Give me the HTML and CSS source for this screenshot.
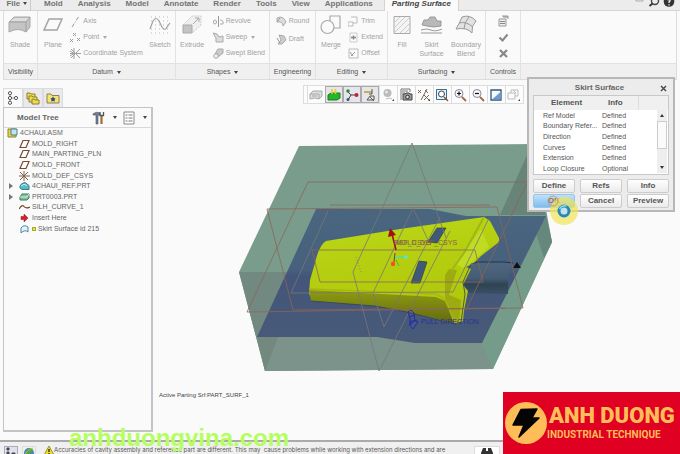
FILE: index.html
```html
<!DOCTYPE html>
<html lang="en">
<head>
<meta charset="utf-8">
<title>Mold design</title>
<link rel="stylesheet" href="styles.css">
</head>
<body>
<div class="app">
  <header class="tabbar">
    <button class="tab file">File <span class="caret"></span></button>
    <nav class="tabs">
      <button class="tab">Mold</button><button class="tab">Analysis</button><button class="tab">Model</button><button class="tab">Annotate</button><button class="tab">Render</button><button class="tab">Tools</button><button class="tab">View</button><button class="tab">Applications</button><button class="tab active">Parting Surface</button>
    </nav>
    <svg class="tools" width="46" height="11" viewBox="634 0 46 11"><path d="M636 0v1h7v-1" fill="none" stroke="#aaa"/><circle cx="655" cy="1" r="3.5" fill="none" stroke="#444" stroke-width="1.4"/><path d="M652.500 3.500 649.500 6" stroke="#333" stroke-width="1.800"/><circle cx="669" cy="1.500" r="5.300" fill="#333"/><path d="M667.500 0q3-1 2.500 1l-1 1v1M669 4.200v1.200" fill="none" stroke="#fff" stroke-width="1.200"/></svg>
  </header>

  <div class="ribbon">
    <section class="group">
      <div class="body">
        <button class="big"><svg width="24" height="20" viewBox="0 0 24 20"><path d="M1 7 6 2h16v10l-4 5q-8-5-17 0z" fill="#c4c4c4" stroke="#a8a8a8"/><path d="M1 7h17v10M18 7l4-5" fill="none" stroke="#a0a0a0"/><path d="M2 6 6.500 3H21l-3 3z" fill="#ddd"/></svg>Shade</button>
      </div>
      <div class="label">Visibility</div>
    </section>
    <section class="group">
      <div class="body spread">
        <button class="big"><svg width="22" height="20" viewBox="0 0 22 20"><path d="M7 4h13l-5 11H2z" fill="#fafafa" stroke="#a3a3a3" stroke-width="1.500"/></svg>Plane</button>
        <div class="stack">
          <button class="small"><svg width="11" height="11" viewBox="0 0 11 11"><path d="M2 11 9 0" stroke="#999" stroke-dasharray="4 1.500 1 1.500"/></svg>Axis</button>
          <button class="small"><svg width="11" height="11" viewBox="0 0 11 11"><path d="m3 1 3 3m0-3L3 4M0 7l3 3m0-3-3 3M7 6l3 3m0-3L7 9" stroke="#999"/></svg>Point <span class="caret"></span></button>
          <button class="small"><svg width="11" height="11" viewBox="0 0 11 11"><path d="M1 1l9 9M10 1l-9 9M4 0v11M0 5.500h11M0 3l4 2.500L0 8" fill="none" stroke="#a0a0a0"/></svg>Coordinate System</button>
        </div>
        <button class="big"><svg width="22" height="20" viewBox="0 0 22 20"><path d="M2 2h19M2 6h19M2 10h19M2 14h19M2 18h19" stroke="#bbb" stroke-dasharray="1 3"/><path d="M1 14 4 6q3-5 6 0l3 6q3 5 5 0l3-4" fill="none" stroke="#a0a0a0" stroke-width="1.200"/></svg>Sketch</button>
      </div>
      <div class="label">Datum <span class="caret"></span></div>
    </section>
    <section class="group">
      <div class="body spread">
        <button class="big"><svg width="22" height="20" viewBox="0 0 22 20"><path d="M2 10 11 1h9v9l-9 8" fill="#f0f0f0" stroke="#ccc" stroke-dasharray="2 1"/><path d="M2 10h9v8H2z" fill="#c4c4c4" stroke="#aaa"/><path d="m12 9 6-6m0 0h-4m4 0v4" fill="none" stroke="#aaa"/></svg>Extrude</button>
        <div class="stack">
          <button class="small"><svg width="11" height="11" viewBox="0 0 11 11"><path d="M5.500 0v11" stroke="#999"/><ellipse cx="2" cy="6" rx="1.500" ry="2" fill="none" stroke="#aaa"/><path d="M7 4q4 0 3 4H7" fill="none" stroke="#aaa"/></svg>Revolve</button>
          <button class="small"><svg width="11" height="11" viewBox="0 0 11 11"><path d="M0 1q5 0 6 4l4-1v6H3V6z" fill="#ddd" stroke="#aaa"/></svg>Sweep <span class="caret"></span></button>
          <button class="small"><svg width="11" height="11" viewBox="0 0 11 11"><path d="M5 1h5v4L5 9V6H2z" fill="#ccc" stroke="#aaa"/><circle cx="3" cy="8" r="2.300" fill="#eee" stroke="#aaa"/></svg>Swept Blend</button>
        </div>
      </div>
      <div class="label">Shapes <span class="caret"></span></div>
    </section>
    <section class="group">
      <div class="body center">
        <div class="stack loose">
          <button class="small"><svg width="11" height="11" viewBox="0 0 11 11"><path d="M1 2q6-3 9 4l-3 4q0-5-6-4z" fill="#ddd" stroke="#aaa"/><path d="m1 6 3-4" stroke="#999"/></svg>Round</button>
          <button class="small"><svg width="11" height="11" viewBox="0 0 11 11"><path d="M3 1 8 2l2 4-4 4H2l3-4z" fill="#ccc" stroke="#aaa"/><path d="m1 4 3 5" stroke="#999"/></svg>Draft</button>
        </div>
      </div>
      <div class="label">Engineering</div>
    </section>
    <section class="group">
      <div class="body spread">
        <button class="big"><svg width="22" height="20" viewBox="0 0 22 20"><path d="M10 1h10v12H10z" fill="none" stroke="#aaa" stroke-width="1.200"/><circle cx="7.500" cy="12" r="6.500" fill="#fafafa" stroke="#aaa" stroke-width="1.200"/></svg>Merge</button>
        <div class="stack">
          <button class="small"><svg width="11" height="11" viewBox="0 0 11 11"><path d="M3 1h6v6H5M0 6h5v4H0z" fill="none" stroke="#bbb"/></svg>Trim</button>
          <button class="small"><svg width="11" height="11" viewBox="0 0 11 11"><path d="M2 1h7v9H2z" fill="none" stroke="#ccc"/><path d="M3 5.500h5M5.500 3.500v4" stroke="#888" stroke-width="1.500"/></svg>Extend</button>
          <button class="small"><svg width="11" height="11" viewBox="0 0 11 11"><path d="M1 1h9v9H1z" fill="none" stroke="#bbb"/><path d="m3 8 4-4M2 4l3 4" stroke="#999"/></svg>Offset</button>
        </div>
      </div>
      <div class="label">Editing <span class="caret"></span></div>
    </section>
    <section class="group">
      <div class="body spread">
        <button class="big"><svg width="20" height="20" viewBox="0 0 20 20"><path d="M2 1.500h16v17H2z" fill="#f4f4f4" stroke="#aaa"/><path d="M2 8 8 2M2 13 13 2M3 17 17 3M8 18l10-10M13 18l5-5" stroke="#ccc"/></svg>Fill</button>
        <button class="big"><svg width="24" height="20" viewBox="0 0 24 20"><path d="m2 10 2-5h4l2-3h5l2 4h4v5q-8 2-14 0z" fill="#b8b8b8" stroke="#999"/><path d="M1 15q6-2 10 0t11-1M1 18h21" fill="none" stroke="#999"/></svg>Skirt<br>Surface</button>
        <button class="big"><svg width="24" height="20" viewBox="0 0 24 20"><path d="M8 2q8-3 14 4-5 5-4 12-5-6-16-4 3-5 6-12z" fill="#e2e2e2" stroke="#999"/><path d="M5 8q7-2 14 4M15 2q-5 5-5 12" fill="none" stroke="#999"/></svg>Boundary<br>Blend</button>
      </div>
      <div class="label">Surfacing <span class="caret"></span></div>
    </section>
    <section class="group">
      <div class="body center">
        <div class="stack">
          <button class="small" aria-label="Properties"><svg width="11" height="12" viewBox="0 0 11 12"><path d="M1 4h7v7H1zM4 1h6v3" fill="#eee" stroke="#999"/><path d="M2 6.500h5M2 8.500h5M5 2h5" stroke="#888"/></svg></button>
          <button class="small" aria-label="Accept"><svg width="11" height="11" viewBox="0 0 11 11"><path d="m1.500 5.500 3 3 5-6" fill="none" stroke="#888" stroke-width="2"/></svg></button>
          <button class="small" aria-label="Cancel feature"><svg width="11" height="11" viewBox="0 0 11 11"><path d="m2 2 7 7M9 2 2 9" stroke="#888" stroke-width="2.200"/></svg></button>
        </div>
      </div>
      <div class="label">Controls</div>
    </section>
    <section class="group"><div class="body"></div><div class="label"></div></section>
  </div>

  <main class="work">
    <aside class="navigator">
      <div class="navtabs">
        <button class="navtab active" aria-label="Model tree"><svg width="12" height="14" viewBox="0 0 12 14"><path d="M3 2v10M3 7h5" stroke="#999"/><circle cx="3" cy="2.200" r="1.600" fill="#fff" stroke="#555"/><circle cx="3" cy="7" r="1.600" fill="#fff" stroke="#555"/><circle cx="3" cy="11.800" r="1.600" fill="#fff" stroke="#555"/><circle cx="9" cy="7" r="1.600" fill="#fff" stroke="#555"/></svg></button>
        <button class="navtab" aria-label="Folders"><svg width="14" height="14" viewBox="0 0 14 14"><g fill="#efdc4e" stroke="#8a8030"><path d="M1 2h3l1 1h4v5H1z"/><path d="M3 5h3l1 1h4v5H3z"/><path d="M6 8h2l1 1h4v4H6z"/></g></svg></button>
        <button class="navtab" aria-label="Favorites"><svg width="14" height="14" viewBox="0 0 14 14"><path d="M1 3h4l1 1.500h7V12H1z" fill="#f5e46a" stroke="#8a8250"/><path d="m7 5.500 1 1.500 1.500.5L8.500 9l.5 1.500L7 10l-2 .5L5.500 9l-1-1.500L6 7z" fill="#35459a"/></svg></button>
      </div>
      <div class="panel">
        <div class="panelhead">
          <h2>Model Tree</h2>
          <button class="plain" aria-label="Settings"><svg width="13" height="14" viewBox="0 0 13 14"><path d="M1 3q3-3 7-1v2H6v9H4V4H1z" fill="#6b7fa0" stroke="#555" stroke-width=".6"/><path d="M9.500 5v8" stroke="#a06a3a" stroke-width="2.200"/><path d="M8 1v3.500h3.500V1" fill="none" stroke="#555" stroke-width="1.300"/></svg><span class="caret"></span></button>
          <button class="plain" aria-label="Show"><svg width="12" height="14" viewBox="0 0 12 14"><path d="M1 1h10v12H1z" fill="#fff" stroke="#888"/><path d="M2.500 4h2m1 0h4m-7 3h2m1 0h4m-7 3h2m1 0h4" stroke="#777"/></svg><span class="caret"></span></button>
        </div>
        <ul class="tree">
          <li><svg width="11" height="10" viewBox="0 0 11 10"><path d="M1 1h8v8H1z" fill="#e8d640" stroke="#8a8430"/><path d="M4 1h6v6H4z" fill="#b8e8f0" stroke="#579"/></svg>4CHAUI.ASM</li>
          <li><i></i><svg width="11" height="10" viewBox="0 0 11 10"><path d="M4 1.500h6L7 8.500H1z" fill="#fff" stroke="#7a4a32" stroke-width="1.200"/></svg>MOLD_RIGHT</li>
          <li><i></i><svg width="11" height="10" viewBox="0 0 11 10"><path d="M4 1.500h6L7 8.500H1z" fill="#fff" stroke="#7a4a32" stroke-width="1.200"/></svg>MAIN_PARTING_PLN</li>
          <li><i></i><svg width="11" height="10" viewBox="0 0 11 10"><path d="M4 1.500h6L7 8.500H1z" fill="#fff" stroke="#7a4a32" stroke-width="1.200"/></svg>MOLD_FRONT</li>
          <li><i></i><svg width="11" height="10" viewBox="0 0 11 10"><path d="M1 1l8 8M9 1 1 9M5 0v10M0 5h11" stroke="#806048"/></svg>MOLD_DEF_CSYS</li>
          <li><i class="open"></i><svg width="11" height="10" viewBox="0 0 11 10"><path d="M1 5q1-3 5-3.500l4 3v4H3L1 7z" fill="#5bb8c4" stroke="#36808c"/><path d="M2 5q3-3 6-.5" fill="none" stroke="#c8f0f0"/></svg>4CHAUI_REF.PRT</li>
          <li><i class="open"></i><svg width="11" height="10" viewBox="0 0 11 10"><path d="M1 5 3 2h7v4L8 8H1z" fill="#7cc29a" stroke="#407860"/><path d="M1 5h7l2-3" fill="none" stroke="#d0f0dc"/></svg>PRT0003.PRT</li>
          <li><i></i><svg width="11" height="10" viewBox="0 0 11 10"><path d="M0 7q3-5 5-2.500T11 5" fill="none" stroke="#7a4a32" stroke-width="1.200"/></svg>SILH_CURVE_1</li>
          <li><i></i><svg width="11" height="10" viewBox="0 0 11 10"><path d="M2 3.500h3V1l4 4-4 4V6.500H2z" fill="#d8202a" stroke="#901018" stroke-width=".5"/></svg>Insert Here</li>
          <li><i></i><svg width="11" height="10" viewBox="0 0 11 10"><path d="M2 9V4q3-4 7-1v5Q6 5 2 9z" fill="#e2f4fa" stroke="#4a86a8"/></svg><b class="new"></b>Skirt Surface id 215</li>
        </ul>
      </div>
    </aside>

    <section class="viewport">
      <div class="viewbar">
        <button aria-label="Saved views"><svg width="14" height="14" viewBox="0 0 14 14"><path d="M1 6 4 3h9v5l-3 3q-4-2-9 0z" fill="#ddd" stroke="#aaa"/><path d="M1 6h9v5M3 8h5" stroke="#aaa" fill="none"/></svg></button>
        <button class="on" aria-label="Mold display"><svg width="14" height="14" viewBox="0 0 14 14"><path d="M1 7 4 5h9v5l-3 2H1z" fill="#27b52c" stroke="#157a1a"/><path d="M5 1v5M8.500 1v5" stroke="#e4d020" stroke-width="1.600"/></svg></button>
        <button class="on" aria-label="Datum display"><svg width="14" height="14" viewBox="0 0 14 14"><path d="M3 2v2l3 3-3 5M6 7h5" fill="none" stroke="#444"/><circle cx="3" cy="3" r="1.800" fill="#2a8a4a"/><circle cx="3" cy="11.500" r="1.500" fill="#357"/><circle cx="11.500" cy="7" r="2" fill="#c22038"/></svg></button>
        <button class="on" aria-label="Annotation display"><svg width="14" height="14" viewBox="0 0 14 14"><path d="M1 4h8" stroke="#b4a020" stroke-width="1.500"/><path d="M9 1v5H6M4 12l3-4h4v4zM7 9l4 4" fill="none" stroke="#555"/></svg></button>
        <button aria-label="Display style"><svg width="14" height="14" viewBox="0 0 14 14"><circle cx="6.500" cy="5" r="4" fill="#bbb"/><circle cx="5.500" cy="4" r="1.500" fill="#e4e4e4"/><path d="M5 11q4-2 6 0" fill="none" stroke="#bbb"/><path d="M11 13h2v-2z" fill="#333"/></svg></button>
        <button aria-label="View manager"><svg width="14" height="14" viewBox="0 0 14 14"><path d="M2 12V1h9v3M3 3h6M3 5h3" fill="none" stroke="#777"/><path d="M4 6h2l1-1h3l1 1h2v6H4z" fill="#999" stroke="#444"/><circle cx="8.500" cy="9" r="1.800" fill="#ddd" stroke="#333"/></svg></button>
        <button aria-label="Datum filters"><svg width="14" height="14" viewBox="0 0 14 14"><path d="m1 2 3 3m0-3L1 5M10 1 4 12M7 7l5 5m0-5-5 5M8 2l3 3" stroke="#765"/><path d="M11 13h2v-2z" fill="#333"/></svg></button>
        <button aria-label="Refit"><svg width="14" height="14" viewBox="0 0 14 14"><path d="M1.500 1.500h10v10h-10z" fill="#edf5fa" stroke="#357090"/><circle cx="6.500" cy="6" r="3" fill="#fff" stroke="#345"/><path d="m9 9 4 4" stroke="#8a5030" stroke-width="1.500"/></svg></button>
        <button aria-label="Zoom in"><svg width="14" height="14" viewBox="0 0 14 14"><circle cx="6" cy="5.500" r="4" fill="#f4f8fb" stroke="#889"/><path d="M4 5.500h4M6 3.500v4" stroke="#111" stroke-width="1.200"/><path d="m9 9 4 4" stroke="#a06a4a" stroke-width="1.800"/></svg></button>
        <button aria-label="Zoom out"><svg width="14" height="14" viewBox="0 0 14 14"><circle cx="6" cy="5.500" r="4" fill="#f4f8fb" stroke="#889"/><path d="M4 5.500h4" stroke="#111" stroke-width="1.200"/><path d="m9 9 4 4" stroke="#a06a4a" stroke-width="1.800"/></svg></button>
        <button aria-label="Repaint"><svg width="14" height="14" viewBox="0 0 14 14"><path d="M2 2h10v10H2z" fill="#f6f9ff" stroke="#335580" stroke-width="1.300"/><path d="M3 11.500 11.500 4v7.500z" fill="#6f9ad0"/></svg></button>
        <button aria-label="Windows"><svg width="14" height="14" viewBox="0 0 14 14"><path d="M1 5h7v6H1zM4 5V2h7v6H8M6 2l3 3" fill="none" stroke="#bbb"/><path d="M11 13h2v-2z" fill="#333"/></svg></button>
      </div>
      <svg class="scene" viewBox="156 104 524 336" role="img" aria-label="Mold workpiece with parting surface">
        <defs>
          <linearGradient id="part" x1="0" y1="0" x2="0.300" y2="1"><stop offset="0" stop-color="#bad816"/><stop offset="1" stop-color="#b0c60a"/></linearGradient>
          <linearGradient id="sheet" x1="0" y1="0" x2="0" y2="1"><stop offset="0" stop-color="#4a667f"/><stop offset=".45" stop-color="#47607d"/><stop offset=".5" stop-color="#43567a"/><stop offset="1" stop-color="#485a78"/></linearGradient>
          <linearGradient id="side" x1="0" y1="0" x2="0" y2="1"><stop offset="0" stop-color="#8d9c10"/><stop offset="1" stop-color="#62690e"/></linearGradient>
          <linearGradient id="step" x1="0" y1="0" x2="0" y2="1"><stop offset="0" stop-color="#4e6680"/><stop offset=".5" stop-color="#465d74"/><stop offset=".7" stop-color="#2e4454"/><stop offset="1" stop-color="#3a5064"/></linearGradient>
        </defs>
        <path d="M299 146 534 144 552 242 493 369 265 371 239 272z" fill="#7a9c8c"/>
        <path d="M239 272h55l-37 65 8 34z" fill="#718980"/>
        <path d="M257 337h225l11 32-228 2z" fill="#7b938a"/>
        <path d="m265 371 13-34h-21z" fill="#738980"/>
        <path d="m527 155-27 60h46z" fill="#688478"/>
        <path d="m546 215 6 27-59 127-11-26z" fill="#759c8a"/>
        <path d="m546 215 6 27-8 16-8-24z" fill="#66877c"/>
        <path d="M316 209h114l36 7h80l-64 127h-67l-38-6H257z" fill="url(#sheet)"/>
        <path d="m473 263 38-1-3 18v14l-40-1-5-11z" fill="url(#step)"/>
        <path d="m473 264 2-2h29l9 1" fill="none" stroke="#22384a"/>
        <path d="m326 241 74-12 84-12 6 4 9 17v4l-18 14-8 8-7 3 5 2-8 16 5 6-4 20-1 10-7 3-19-5-30-8-32-7-63-5-3-5 1-14 5-17q4-18 11-22z" fill="url(#part)"/>
        <path d="m309 290 2 11 64 5 32 6 30 7 19 5-11-23-9-4z" fill="url(#side)"/>
        <path d="m445 275 4-6 8 1-8 25 12 5-2 24-5-1-9-24z" fill="#9dab10"/>
        <path d="m456 264 25-35 8 18-17 15-9 6z" fill="#c0dc22"/>
        <path d="m484 217-20 36-13 18" fill="none" stroke="#9db618" stroke-width="2"/>
        <path d="m309 289 127 5 9 5 9 22" fill="none" stroke="#a8b612" stroke-width="1.500"/>
        <path d="m311 301 64 5 32 6 48 12 6-2 4-28-2-12 8-18 8-2" fill="none" stroke="#353f62" stroke-width=".8"/>
        <path d="m428 242 9-14 9 0-9 15zM411 283l8-22 8 1-7 21z" fill="#40587a" stroke="#354430" stroke-width=".7"/>
        <g fill="none" stroke="#8d6558" stroke-width=".8">
          <path d="M308 182h219M308 182l-61 130 276-4-26-101-230 2 26 101 212-2M330 205h160"/>
          <path d="M312 250h163l8 32H320zM467 308l60-125"/>
        </g>
        <g fill="none" stroke="#777678" stroke-width=".8">
          <path d="m412 143-59 129 26 99 71-140M412 143l34 95M413 208l-40 85 11 34 56-110M413 208l16 34M328 211l-37 82 162-1 36-74"/>
          <path d="m356 257 5 15" stroke-dasharray="1 2"/>
        </g>
        <path d="m513 268 4-6 4 6z" fill="#111"/>
        <path d="m396 250-4-16" stroke="#a01018" stroke-width="1.600"/><path d="m390 228-2 9 8-2z" fill="#a01018"/>
        <path d="m394 262 1-9" stroke="#833"/><circle cx="393" cy="264" r="2.200" fill="#ff4830"/>
        <path d="M395 257h10" stroke="#48dcb8" stroke-width="1.200"/><circle cx="406" cy="257" r="1.700" fill="#54e8d8"/><path d="m396 260 3 6" stroke="#2cc828"/>
        <text class="csys" x="396" y="245">MOLD_DEF_CSYS</text>
        <text class="csys" x="394" y="245">REF_CSYS</text>
        <path d="m408 312 3-2 3 3 1 8 3 1-5 7-4-5 2-1zM409 317l6-2m-6 7 8-2m-7 5 5-5" fill="none" stroke="#2026b8" stroke-width=".9"/>
        <text class="pull" x="421" y="324">PULL DIRECTION</text>
        <text class="note" x="159" y="397">Active Parting Srf:PART_SURF_1</text>
      </svg>
    </section>
  </main>

  <footer class="status">
    <button class="toggle pressed" aria-label="Toggle tree"><svg width="12" height="12" viewBox="0 0 12 12"><path d="M2 1h2v2H2zM2 5h2v2H2zM2 9h2v2H2zM7 6h3v4H7z" fill="#445" stroke="#445"/></svg></button>
    <button class="toggle" aria-label="Toggle browser"><svg width="12" height="12" viewBox="0 0 12 12"><circle cx="6" cy="6" r="5" fill="#3c8ac0"/><path d="M2 8q1-6 7-6l1 3-4 1-1 5z" fill="#55a838"/><path d="M1 10Q3 3 10 1" fill="none" stroke="#c8b830"/></svg></button>
    <p class="message"><svg width="10" height="9" viewBox="0 0 10 9"><path d="M5 0 10 9H0z" fill="#f0dc20" stroke="#777020" stroke-width=".7"/><path d="M5 3v3M5 7v1" stroke="#222" stroke-width="1.300"/></svg><span>Accuracies of cavity assembly and reference part are different. This may&nbsp; cause problems while working with extension directions and are</span></p>
    <button class="find" aria-label="Find"><svg width="12" height="10" viewBox="0 0 12 10"><path d="M2 1h3v3h2V1h3l2 5v4H7V7H5v3H0V6z" fill="#333"/><path d="M2 7v2M10 7v2" stroke="#ddd"/></svg></button>
  </footer>

  <div class="dialog" role="dialog" aria-label="Skirt Surface">
    <div class="title"><h2>Skirt Surface</h2><button class="plain" aria-label="Close"><svg width="7" height="7" viewBox="0 0 7 7"><path d="m1 1 5 5M6 1 1 6" stroke="#444" stroke-width="1.400"/></svg></button></div>
    <div class="list">
      <table>
        <thead><tr><th>Element</th><th>Info</th><th class="end"></th></tr></thead>
        <tbody>
          <tr><td>Ref Model</td><td>Defined</td><td></td></tr>
          <tr><td>Boundary Refer...</td><td>Defined</td><td></td></tr>
          <tr><td>Direction</td><td>Defined</td><td></td></tr>
          <tr><td>Curves</td><td>Defined</td><td></td></tr>
          <tr><td>Extension</td><td>Defined</td><td></td></tr>
          <tr><td>Loop Closure</td><td>Optional</td><td></td></tr>
        </tbody>
      </table>
      <div class="scroll"><span class="up"></span><span class="thumb"></span><span class="down"></span></div>
    </div>
    <div class="actions">
      <button>Define</button><button>Refs</button><button>Info</button>
      <button class="ok">OK</button><button>Cancel</button><button>Preview</button>
    </div>
    <svg class="pointer" width="34" height="34" viewBox="0 0 34 34"><circle cx="17" cy="17" r="14" fill="#f0e45a" opacity=".72"/><circle cx="17" cy="17" r="5" fill="#bfe4f0" stroke="#2a86b8" stroke-width="3"/><path d="M12.500 15q2-4 7-3" fill="none" stroke="#8fd8ee" stroke-width="1.500"/><circle cx="6" cy="7" r="5" fill="none" stroke="#d08a50" stroke-width=".8"/></svg>
  </div>

  <div class="watermark">anhduongvina.com</div>
  <div class="brand">
    <svg width="42" height="42" viewBox="0 0 42 42"><circle cx="21" cy="21" r="21" fill="#ffbd59"/><path d="M16 7.500 32 7l-5 9h7L14 35l5-12H8z" fill="#050505" stroke="#050505" stroke-width="1.500" stroke-linejoin="round"/></svg>
    <div><strong>ANH DUONG</strong><span>INDUSTRIAL TECHNIQUE</span></div>
  </div>
</div>
</body>
</html>
```

FILE: styles.css
```css
* { box-sizing: border-box; }
body { margin: 0; background: #fafafa; color: #555; font: 7px/10px "Liberation Sans", Arial, sans-serif; }
button { margin: 0; padding: 0; border: 0; background: none; color: inherit; font: inherit; }
svg { display: block; flex: none; }
h2 { margin: 0; font-size: 8px; line-height: 10px; }
.app { position: relative; display: flex; flex-direction: column; height: 100vh; overflow: hidden; }
.caret { display: inline-block; margin-left: 2px; border: 2px solid transparent; border-top: 3px solid #444; border-bottom: 0; vertical-align: middle; }

/* tabs */
.tabbar { display: flex; height: 11px; padding-left: 3px; background: #ececec; border-bottom: 1px solid #d4d4d4; }
.tabs { display: flex; flex: 1; gap: 1px; }
.tab { height: 11px; padding: 0 7px 3px; color: #737373; font-size: 8px; font-weight: bold; line-height: 8px; white-space: nowrap; }
.tab.file { width: 28px; margin-right: 6px; padding: 0 0 3px; border-right: 1px solid #ccc; }
.tab.file .caret { margin-left: 0; }
.tab.active { margin-left: 3px; background: #fafafa; color: #444; font-style: italic; border: solid #d4d4d4; border-width: 0 1px; }

/* ribbon */
.ribbon { display: grid; grid-template-columns: 34px 138px 94px 46px 72px 98px 35px 1fr; margin: 0 3px; border: solid #dcdcdc; border-width: 0 1px 1px; }
.group { display: flex; flex-direction: column; border-right: 1px solid #e2e2e2; }
.group:last-child { border-right: 0; }
.body { display: flex; height: 52px; padding: 2px 4px; color: #a2a2a2; }
.body.spread { justify-content: space-between; }
.body.center { justify-content: center; }
.label { height: 16px; background: #f0f0f0; border-top: 1px solid #e2e2e2; color: #555; line-height: 15px; text-align: center; white-space: nowrap; }
.big { display: flex; flex-direction: column; align-items: center; justify-content: flex-start; gap: 5px; padding-top: 2px; line-height: 9px; text-align: center; }
.stack { display: flex; flex-direction: column; }
.stack.loose { gap: 2px; }
.small { display: flex; align-items: center; gap: 2px; height: 16px; white-space: nowrap; }
.small .caret { border-top-color: #aaa; }

/* work area */
.work { display: flex; flex: 1; min-height: 0; }
.navigator { display: flex; flex-direction: column; width: 156px; padding: 8px 3px; }
.navtabs { display: flex; }
.navtab { display: flex; align-items: center; justify-content: center; width: 20px; height: 19px; background: #e9e9ee; border: 1px solid #dcdcdc; border-bottom: 0; }
.navtab.active { background: #fafafa; }
.panel { flex: 1; border: 1px solid #c4c4c8; border-right-width: 2px; border-bottom-width: 2px; }
.panelhead { display: flex; align-items: center; gap: 6px; height: 20px; padding: 0 4px 0 13px; border-bottom: 1px solid #d8d8d8; }
.panelhead h2 { flex: 1; color: #666; }
.plain { display: flex; align-items: center; gap: 6px; }
.tree { display: grid; grid-auto-rows: 1fr; height: 106px; margin: 0; padding: 0 0 0 3px; list-style: none; }
.tree li { display: flex; align-items: center; gap: 2px; color: #666; line-height: 10px; white-space: nowrap; }
.tree i { width: 10px; height: 6px; }
.tree i.open { width: 4px; margin: 0 4px 0 2px; border: 3px solid transparent; border-left: 4px solid #777; border-right: 0; }
.new { width: 4px; height: 4px; background: #e8e050; border: 1px solid #a8a830; }

/* viewport */
.viewport { display: flex; flex: 1; flex-direction: column; align-items: center; min-width: 0; padding-top: 5px; }
.viewbar { display: flex; height: 19px; margin-right: 10px; padding-left: 3px; background: #fcfcfc; border: 1px solid #ddd; }
.viewbar button { display: flex; align-items: center; justify-content: center; width: 18px; border-left: 1px solid #ddd; }
.viewbar .on { background: #e6e6ea; border: 1px solid #aaa; }
.scene { width: 100%; min-height: 0; flex: 1; }
.csys { fill: #86604c; font-size: 7px; }
.pull { fill: #2a3298; font-size: 7px; }
.note { fill: #444; font-size: 6px; }

/* status bar */
.status { display: flex; align-items: flex-start; gap: 4px; height: 14px; padding: 4px 4px 0; background: #f0f0f0; border-top: 2px solid #aaa; }
.toggle { display: flex; justify-content: center; width: 14px; height: 13px; border: 1px solid #ddd; }
.toggle.pressed { background: #dfe2ea; border-color: #aab; }
.message { display: flex; flex: 1; min-width: 0; margin: 0 0 0 4px; font: 6px/8px Inter, "Liberation Sans", sans-serif; white-space: nowrap; }
.find { display: flex; justify-content: center; width: 26px; height: 13px; margin-right: 176px; background: #fff; border: 1px solid #ddd; }

/* dialog */
.dialog { position: absolute; top: 77px; right: 5px; width: 148px; padding: 2px 4px 2px; background: #ececec; border: 2px solid #b8b8b8; }
.title { display: flex; align-items: center; height: 14px; padding-right: 2px; }
.title h2 { flex: 1; padding-left: 6px; color: #666; text-align: center; }
.list { position: relative; background: #fff; border: 1px solid #c8c8c8; }
table { width: 100%; height: 78px; border-collapse: collapse; table-layout: fixed; }
th { height: 14px; padding: 0 0 0 17px; background: #f0f0f0; font-size: 8px; line-height: 10px; text-align: left; }
th:first-child { width: 60px; }
th + th { padding-left: 14px; }
td { padding: 0 0 0 9px; line-height: 9px; text-align: left; white-space: nowrap; }
td + td { padding-left: 8px; }
th.end { width: 30px; border-left: 1px solid #ddd; }
.scroll { position: absolute; top: 14px; right: 1px; bottom: 1px; display: flex; flex-direction: column; align-items: center; gap: 2px; width: 10px; background: #eee; }
.up { margin-top: 4px; border: 2px solid transparent; border-bottom: 3px solid #333; border-top: 0; }
.thumb { width: 10px; height: 28px; margin: 2px 0 auto; background: #fafafa; border: 1px solid #ccc; }
.down { margin-bottom: 4px; border: 2px solid transparent; border-top: 3px solid #333; border-bottom: 0; }
.actions { display: grid; grid-template-columns: repeat(3, 1fr); gap: 1px 5px; margin-top: 4px; }
.actions button { height: 14px; background: linear-gradient(#fff, #ebebeb); border: 1px solid #ccc; border-radius: 2px; color: #555; font-size: 8px; font-weight: bold; line-height: 10px; }
.actions .ok { background: linear-gradient(#bfe2fa, #7dbcf0); border-color: #9cc4e4; color: #a06a50; }
.pointer { position: absolute; left: 18px; top: 115px; }

/* overlays */
.watermark { position: absolute; left: 69px; bottom: 0; color: #b4ff5e; font-size: 24px; font-weight: bold; line-height: 32px; }
.brand { position: absolute; right: 0; bottom: 0; display: flex; align-items: center; width: 177px; height: 62px; padding-left: 2px; background: #df0022; color: #ffbd59; font-family: Roboto, "Liberation Sans", sans-serif; font-weight: bold; white-space: nowrap; }
.brand strong, .brand span { display: block; }
.brand strong { padding-left: 2px; font-size: 22px; font-weight: 900; line-height: 24px; }
.brand span { font-size: 10px; line-height: 14px; }
```
